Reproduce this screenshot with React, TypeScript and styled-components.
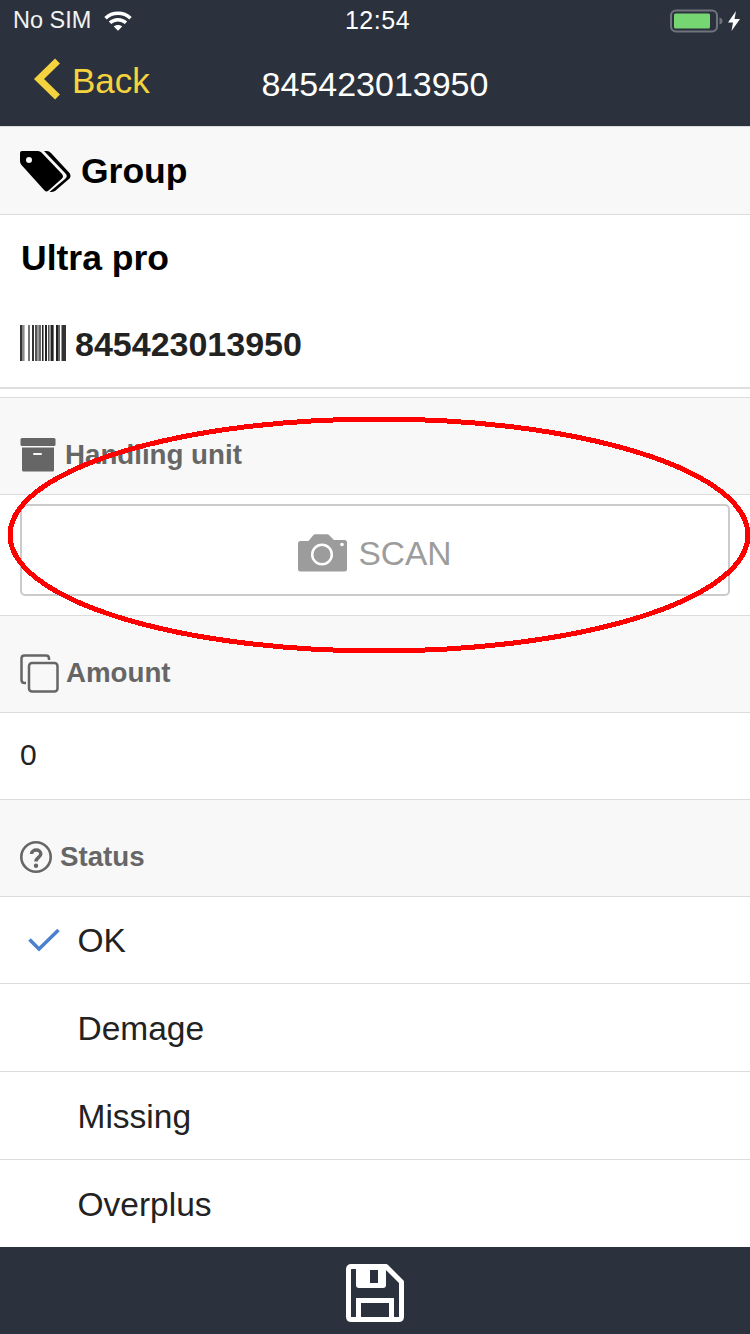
import React from "react";
import styled, { createGlobalStyle } from "styled-components";

const Global = createGlobalStyle`
  html, body { margin: 0; padding: 0; background: #fff; }
  body { font-family: "Liberation Sans", Arial, sans-serif; color: #222; }
  * { box-sizing: border-box; }
`;

const Page = styled.div`
  position: relative;
  width: 750px;
  height: 1334px;
  overflow: hidden;
  display: flex;
  flex-direction: column;
`;

const TopBar = styled.header`
  height: 127px;
  background: #2c323d;
  border-bottom: 1px solid #d9d9d9;
  color: #fff;
  display: flex;
  flex-direction: column;
`;

const StatusBar = styled.div`
  height: 41px;
  padding: 0 10px 0 13px;
  display: grid;
  grid-template-columns: 1fr auto 1fr;
  align-items: center;
  font-size: 23.5px;
`;

const StatusLeft = styled.div`
  display: flex;
  align-items: center;
  gap: 13px;
`;

const StatusRight = styled.div`
  display: flex;
  align-items: center;
  justify-content: flex-end;
  gap: 4px;
`;

const Carrier = styled.span`
  color: #f2f2f2;
`;

const Clock = styled.span`
  font-size: 25px;
  letter-spacing: 0.5px;
  margin-left: 2px;
`;

const NavBar = styled.div`
  flex: 1;
  position: relative;
  display: flex;
  align-items: center;
  justify-content: center;
  padding-top: 1px;
`;

const BackLink = styled.div`
  position: absolute;
  left: 33px;
  top: 16px;
  display: flex;
  align-items: center;
  gap: 11px;
  color: #f5d33f;
  font-size: 35px;
`;

const BackLabel = styled.span`
  margin-top: 4px;
`;

const Title = styled.div`
  font-size: 34px;
  color: #fff;
`;

const SectionHeader = styled.div<{ $h: number; $gap: number }>`
  height: ${(p) => p.$h}px;
  background: #f8f8f8;
  border-bottom: 1px solid #dcdcdc;
  padding: 18px 20px 0;
  display: flex;
  align-items: center;
  gap: ${(p) => p.$gap}px;
  color: #666;
  font-size: 27.7px;
  font-weight: 700;
`;

const GroupHeader = styled(SectionHeader)`
  color: #000;
  font-size: 35.5px;
  padding-top: 2px;
`;

const Row = styled.div<{ $h: number }>`
  height: ${(p) => p.$h}px;
  display: flex;
  align-items: center;
  padding: 0 20px;
  background: #fff;
`;

const BoldRow = styled(Row)`
  font-weight: 700;
  font-size: 35.5px;
  color: #000;
  padding-left: 21px;
`;

const BarcodeRow = styled(Row)`
  gap: 9px;
  font-weight: 700;
  font-size: 34px;
  color: #222;
  border-bottom: 2px solid #dedede;
`;

const BarcodeIcon = styled.svg`
  margin-bottom: 2px;
`;

const BarcodeText = styled.span`
  margin-top: 1px;
`;

const Spacer = styled.div`
  height: 9px;
  background: #fff;
  border-bottom: 1px solid #dcdcdc;
`;

const ScanRow = styled.div`
  height: 121px;
  padding: 9px 20px 19px;
  border-bottom: 1px solid #dcdcdc;
  background: #fff;
`;

const ScanButton = styled.div`
  height: 92px;
  border: 2px solid #cbcbcb;
  border-radius: 5px;
  display: flex;
  align-items: center;
  justify-content: center;
  gap: 11px;
  color: #9c9c9c;
  font-size: 33.5px;
  padding-top: 5px;
`;

const ScanLabel = styled.span`
  margin-top: 2px;
`;

const ValueRow = styled(Row)`
  font-size: 30px;
  color: #222;
  border-bottom: 1px solid #dcdcdc;
  padding-bottom: 3px;
`;

const OptionRow = styled.div<{ $h: number; $last?: boolean }>`
  height: ${(p) => p.$h}px;
  display: grid;
  grid-template-columns: 77.5px 1fr;
  align-items: center;
  font-size: 33.5px;
  color: #222;
  background: #fff;
  border-bottom: ${(p) => (p.$last ? "none" : "1px solid #dcdcdc")};
`;

const OptionLabel = styled.span`
  margin-top: 2px;
`;

const CheckSlot = styled.div`
  display: flex;
  justify-content: flex-start;
  padding-left: 28px;
`;

const Footer = styled.footer`
  flex: 1;
  background: #2c323d;
  display: flex;
  align-items: center;
  justify-content: center;
  padding-top: 5px;
`;

const Annotation = styled.svg`
  position: absolute;
  left: 0;
  top: 0;
  pointer-events: none;
`;

const Wifi = () => (
  <svg width="28" height="20" viewBox="0 0 28 20" fill="none" stroke="#fff" strokeWidth="3.5">
    <path d="M1.5 7.2C8.5 .6 19.500 .6 26.500 7.200" />
    <path d="M6 11.800C10.500 7.700 17.500 7.700 22 11.800" />
    <path d="M14 19.800 9.800 15.500C12.200 13.500 15.800 13.500 18.200 15.500Z" fill="#fff" stroke="none" />
  </svg>
);

const Battery = () => (
  <svg width="54" height="24" viewBox="0 0 54 24" fill="none">
    <rect x="1" y="1.500" width="46" height="21" rx="5" stroke="#6f747c" strokeWidth="2" />
    <rect x="4" y="4.500" width="36" height="15" rx="1.500" fill="#76d672" />
    <path d="M49.500 8.500C51.500 9 52.500 10.500 52.500 12S51.500 15 49.500 15.500Z" fill="#6f747c" />
  </svg>
);

const Bolt = () => (
  <svg width="12" height="20" viewBox="0 0 12 20" fill="#fff">
    <path d="M8 0 0 11.500H5L3.500 20 12 8H6.500Z" />
  </svg>
);

const Chevron = () => (
  <svg width="28" height="42" viewBox="0 0 28 42" fill="none" stroke="#f5d33f" strokeWidth="7" strokeLinejoin="miter">
    <path d="M24.500 3 6 21 24.500 39" />
  </svg>
);

const Tags = () => (
  <svg width="51" height="42" viewBox="0 0 51 42" fill="#000">
    <path d="M2 0H18Q20 0 21.500 1.500L42 23Q44 25.500 42 27.500L28.500 39.500Q26.500 41.500 24.500 39.500L1.500 14Q0 12.500 0 10V2Q0 0 2 0Z" />
    <circle cx="9" cy="9" r="3" fill="#f8f8f8" />
    <path d="M24 0H27Q29 0 31 2L49.500 22Q51.500 25 49.500 27.500L35 40Q33 41 31 41H29.500L45.500 27.500Q48 25 45.500 22.500Z" />
  </svg>
);

const BARS: [number, number, string][] = [
  [0, 2, "#333"], [2, 2, "#8a8a8a"], [4, 1, "#bbb"], [8, 2, "#777"], [12, 2, "#333"],
  [15, 2, "#555"], [17, 2, "#999"], [19, 2, "#666"], [22, 1, "#222"], [23, 1, "#888"],
  [25, 2, "#222"], [28, 1, "#555"], [29, 2, "#999"], [31, 2, "#222"], [33, 1, "#777"],
  [36, 2, "#222"], [38, 2, "#666"], [41, 1, "#999"], [42, 4, "#333"],
];

const Barcode = () => (
  <BarcodeIcon width="46" height="36" viewBox="0 0 46 36">
    {BARS.map(([x, w, c]) => (
      <rect key={x} x={x} y="0" width={w} height="36" fill={c} />
    ))}
  </BarcodeIcon>
);

const ArchiveBox = () => (
  <svg width="36" height="34" viewBox="0 0 36 34" fill="#666">
    <rect x="0.500" y="0" width="35" height="8" rx="1.500" />
    <path d="M2 9.500H34V32Q34 33.500 32.500 33.500H3.500Q2 33.500 2 32ZM14 15Q13 15 13 16T14 17H21Q22 17 22 16T21 15Z" fillRule="evenodd" />
  </svg>
);

const Copy = () => (
  <svg width="39" height="39" viewBox="0 0 39 39" fill="none" stroke="#666" strokeWidth="2.500">
    <path d="M6 29H4.500Q1.500 29 1.500 26V4.500Q1.500 1.500 4.500 1.500H26Q29 1.500 29 4.500V6" />
    <rect x="9" y="9" width="28.500" height="28.500" rx="3" />
  </svg>
);

const Question = () => (
  <svg width="32" height="32" viewBox="0 0 32 32" fill="none" stroke="#666">
    <circle cx="16" cy="16" r="14.700" strokeWidth="2.600" />
    <path d="M11.500 13C11.800 7.800 20.800 7.800 20.800 13C20.800 16.500 16 16.500 16 20.500" strokeWidth="3.500" />
    <circle cx="16" cy="24.800" r="2.200" fill="#666" stroke="none" />
  </svg>
);

const Camera = () => (
  <svg width="49" height="38" viewBox="0 0 49 38">
    <path
      fill="#9c9c9c"
      d="M2.500 7H10.500L15 1.500Q16 .3 17.500 .3H29Q30.500 .3 31.500 1.500L36 6H46.500Q49 6 49 8.500V35Q49 37.500 46.500 37.500H2.500Q0 37.500 0 35V9.500Q0 7 2.500 7Z"
    />
    <circle cx="24" cy="20.500" r="9.800" fill="none" stroke="#fff" strokeWidth="2.500" />
    <circle cx="44" cy="10.500" r="1.800" fill="#fff" />
  </svg>
);

const Check = () => (
  <svg width="32" height="24" viewBox="0 0 32 24" fill="none" stroke="#4a80cf" strokeWidth="3.500">
    <path d="M1.500 11.500 11 21 30.500 2" />
  </svg>
);

const Floppy = () => (
  <svg width="58" height="58" viewBox="0 0 58 58" fill="none" stroke="#fff" strokeWidth="5">
    <path d="M5.500 2.500H40L55.500 18V52.500Q55.500 55.500 52.500 55.500H5.500Q2.500 55.500 2.500 52.500V5.500Q2.500 2.500 5.500 2.500Z" strokeLinejoin="round" />
    <path
      d="M10 3H40V21Q40 24 37 24H13Q10 24 10 21ZM24 6V19H32V6Z"
      fill="#fff"
      fillRule="evenodd"
      stroke="none"
    />
    <path d="M12.500 55V36.500H45.500V55" />
  </svg>
);

export default function App() {
  return (
    <Page>
      <Global />
      <TopBar>
        <StatusBar>
          <StatusLeft>
            <Carrier>No SIM</Carrier>
            <Wifi />
          </StatusLeft>
          <Clock>12:54</Clock>
          <StatusRight>
            <Battery />
            <Bolt />
          </StatusRight>
        </StatusBar>
        <NavBar>
          <BackLink>
            <Chevron />
            <BackLabel>Back</BackLabel>
          </BackLink>
          <Title>845423013950</Title>
        </NavBar>
      </TopBar>

      <GroupHeader $h={88} $gap={10}>
        <Tags />
        <span>Group</span>
      </GroupHeader>
      <BoldRow $h={86}>Ultra pro</BoldRow>
      <BarcodeRow $h={88}>
        <Barcode />
        <BarcodeText>845423013950</BarcodeText>
      </BarcodeRow>
      <Spacer />

      <SectionHeader $h={97} $gap={9}>
        <ArchiveBox />
        <span>Handling unit</span>
      </SectionHeader>
      <ScanRow>
        <ScanButton>
          <Camera />
          <ScanLabel>SCAN</ScanLabel>
        </ScanButton>
      </ScanRow>

      <SectionHeader $h={97} $gap={7}>
        <Copy />
        <span>Amount</span>
      </SectionHeader>
      <ValueRow $h={87}>0</ValueRow>

      <SectionHeader $h={97} $gap={8}>
        <Question />
        <span>Status</span>
      </SectionHeader>
      <OptionRow $h={87}>
        <CheckSlot>
          <Check />
        </CheckSlot>
        <OptionLabel>OK</OptionLabel>
      </OptionRow>
      <OptionRow $h={88}>
        <CheckSlot />
        <OptionLabel>Demage</OptionLabel>
      </OptionRow>
      <OptionRow $h={88}>
        <CheckSlot />
        <OptionLabel>Missing</OptionLabel>
      </OptionRow>
      <OptionRow $h={87} $last>
        <CheckSlot />
        <OptionLabel>Overplus</OptionLabel>
      </OptionRow>

      <Footer>
        <Floppy />
      </Footer>

      <Annotation width="750" height="1334" viewBox="0 0 750 1334" fill="none">
        <ellipse cx="379" cy="535" rx="369" ry="116" stroke="#f00" strokeWidth="5" shapeRendering="crispEdges" />
      </Annotation>
    </Page>
  );
}
